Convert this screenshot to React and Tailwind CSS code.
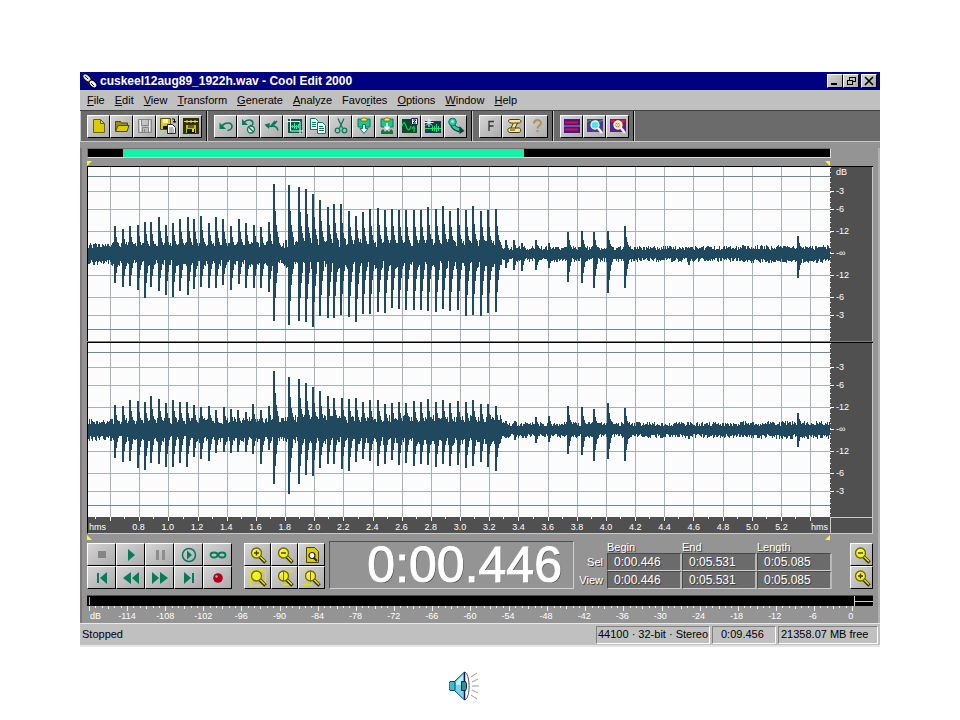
import React from "react";

// [x, height above the centre line, depth below it]
const LEFT_SPIKES = [
  [115, 28, 29], [123, 25, 33], [130, 28, 32], [138, 29, 36], [145, 32, 44], [151, 32, 33],
  [159, 37, 37], [166, 29, 41], [173, 31, 43], [180, 35, 37], [188, 37, 41], [194, 35, 35],
  [201, 38, 33], [209, 31, 34], [216, 37, 34], [223, 35, 31], [231, 28, 36], [239, 35, 30],
  [246, 31, 34], [254, 29, 34], [261, 27, 34], [269, 32, 38], [274, 70, 67], [289, 69, 71],
  [299, 67, 67], [306, 65, 68], [313, 60, 73], [320, 54, 62], [328, 47, 64], [334, 50, 64],
  [341, 50, 61], [349, 43, 63], [356, 38, 68], [363, 42, 60], [370, 45, 60], [378, 46, 58],
  [385, 44, 59], [392, 45, 54], [399, 44, 55], [406, 44, 56], [414, 44, 56], [421, 44, 56],
  [428, 47, 57], [436, 45, 58], [443, 48, 55], [450, 43, 57], [458, 46, 56], [466, 44, 62],
  [473, 48, 61], [481, 43, 62], [488, 44, 59], [496, 45, 58], [506, 14, 14], [514, 14, 16],
  [522, 11, 17], [536, 14, 16], [549, 11, 14], [568, 22, 28], [582, 23, 29], [594, 22, 34],
  [608, 23, 39], [625, 28, 34], [689, 6, 11], [798, 18, 24],
];

const RIGHT_SPIKES = [
  [115, 25, 28], [123, 24, 32], [130, 30, 31], [138, 29, 38], [145, 28, 40], [151, 34, 33],
  [159, 31, 34], [166, 27, 37], [173, 30, 37], [180, 28, 33], [187, 28, 37], [194, 25, 27],
  [201, 23, 29], [209, 24, 31], [216, 20, 23], [224, 23, 22], [231, 21, 23], [238, 20, 22],
  [246, 18, 22], [253, 26, 24], [261, 20, 34], [269, 24, 20], [274, 59, 54], [289, 53, 64],
  [299, 51, 54], [306, 47, 45], [313, 43, 46], [320, 39, 38], [328, 34, 34], [334, 32, 34],
  [342, 32, 39], [349, 31, 41], [356, 32, 32], [363, 28, 29], [370, 30, 31], [378, 30, 36],
  [385, 26, 34], [392, 27, 30], [399, 28, 35], [406, 27, 33], [414, 29, 36], [421, 28, 34],
  [428, 31, 35], [436, 28, 37], [443, 30, 34], [450, 27, 36], [458, 29, 35], [466, 28, 38],
  [473, 30, 36], [481, 26, 32], [488, 26, 37], [496, 24, 41], [506, 9, 8], [515, 9, 10],
  [536, 13, 13], [549, 14, 12], [568, 24, 24], [582, 23, 25], [594, 21, 31], [608, 27, 29],
  [625, 22, 31], [689, 5, 9], [798, 17, 17],
];

const PLOT_LEFT = 88;
const PLOT_WIDTH = 742;
const CENTRE = 87;
const UP_DECAY = [1, 1, 0.62, 0.42, 0.32, 0.24];
const DOWN_DECAY = [1, 1, 0.66, 0.44, 0.28];

const noiseLevel = (x) => {
  if (x < 112) return 10;
  if (x < 285) return 11;
  if (x < 502) return 13;
  if (x < 660) return 7;
  if (x < 740) return 7;
  return 8;
};

const buildWave = (spikes, seed) => {
  let state = seed;
  const random = () => {
    state = (state * 16807) % 2147483647;
    return state / 2147483647;
  };

  const up = [];
  const down = [];
  for (let i = 0; i < PLOT_WIDTH; i++) {
    const level = noiseLevel(i + PLOT_LEFT);
    up.push(level * (0.55 + random() * 0.6));
    down.push(level * (0.55 + random() * 0.6));
  }
  spikes.forEach(([x, high, low]) => {
    const start = x - PLOT_LEFT - 1;
    UP_DECAY.forEach((k, n) => {
      up[start + n] = Math.max(up[start + n], high * k);
    });
    DOWN_DECAY.forEach((k, n) => {
      down[start + n] = Math.max(down[start + n], low * k);
    });
  });

  let d = "";
  for (let i = 0; i < PLOT_WIDTH; i++) {
    const top = Math.round(CENTRE - up[i]);
    const bottom = Math.round(CENTRE + down[i]);
    d += `M${i} ${top}h1v${bottom - top}h-1z`;
  }
  return d;
};

const leftWave = buildWave(LEFT_SPIKES, 4711);
const rightWave = buildWave(RIGHT_SPIKES, 9203);

const TIME_LINES = Array.from({ length: 25 }, (_, i) => Math.round(22 + i * 29.17));
const LEVEL_LINES = [24, 42, 64, 108, 130, 148];
const TIME_LABELS = Array.from({ length: 23 }, (_, i) => (0.8 + i * 0.2).toFixed(1));
const METER_LABELS = Array.from({ length: 20 }, (_, i) => String(-114 + i * 6));

const raised =
  "flex items-center justify-center border border-t-white border-l-white border-r-black border-b-black bg-linear-to-br from-[#d4d4d4] to-[#acacac]";

const GREEN = "#087a5c";

const Icon = ({ size = 18, children }) => (
  <svg
    width={size}
    height={size}
    viewBox="0 0 18 18"
    fill="none"
    className="shrink-0"
    aria-hidden="true"
  >
    {children}
  </svg>
);

const Magnifier = ({ children }) => (
  <>
    <path d="M10.500 10.500l6 6" stroke="#333000" strokeWidth="3.600" />
    <path d="M10.500 10l5.500 5.500" stroke="#e8e000" strokeWidth="1.600" />
    <circle cx="7.500" cy="7" r="5" fill="#f4f020" stroke="#6d6a00" strokeWidth="1.300" />
    <path d="M4.500 6c.5-1.500 1.500-2 3-2" stroke="#ffffc0" />
    {children}
  </>
);

const PasteBase = () => (
  <>
    <path d="M3 2h12v8H3z" fill="#16c79a" stroke={GREEN} />
    <path d="M6 4V2l2-1h2l2 1v2z" fill="#f2ee4a" stroke="#6d6a00" strokeWidth=".8" />
  </>
);

const icons = {
  new: <path d="M3.500 2.500h7l4 4v9h-11zM10.500 2.500v4h4" fill="#dccb00" stroke="#6b6100" />,
  open: (
    <>
      <path d="M2.500 14V4.500h5l1 1.500h6V8" fill="#a09000" stroke="#4d4600" />
      <path d="M2.500 14.500L5 8.500h11l-2 6z" fill="#dccb00" stroke="#4d4600" />
    </>
  ),
  save: (
    <>
      <path d="M2.500 2.500h13v13h-13z" stroke="#858585" />
      <path d="M5.500 2.500v6h7v-6M6.500 15.500v-5h6v5M8.500 12v3" stroke="#858585" />
      <path d="M3.500 3.500h1v11M13.500 3.500v11" stroke="#f2f2f2" />
    </>
  ),
  saveAs: (
    <>
      <path d="M1.500 1.500h10v11h-10z" fill="#dccb00" stroke="#5a5200" />
      <path d="M4 2h5v4H4z" fill="#eee" />
      <path d="M4 9h4v3H4z" fill="#111" />
      <path d="M8.500 7.500h5l3 3v6h-8z" fill="#fff" stroke="#222" />
      <path d="M10 11h4M10 13h5M10 15h5" stroke="#444" strokeWidth=".8" />
      <path d="M13 2h2.500v3M14 4l1.500 2L17 4" stroke="#111" />
    </>
  ),
  saveSel: (
    <>
      <path d="M1 1h16v16H1z" fill="#2e3200" />
      <path d="M4 8h10v8H4z" fill="#c9bc00" />
      <path d="M6 8h6v3H6z" fill="#6d6600" />
      <path d="M5 12h8v4H5z" fill="#151500" />
      <path d="M10 12h2v3h-2z" fill="#e8e000" />
      <path d="M2 4.500h14M5 3v3M9 3v3M13 3v3" stroke="#f0e800" />
    </>
  ),
  undo: (
    <>
      <path d="M5 9c3-4 10-4 10 .5 0 2-2 4-4.500 4" stroke={GREEN} strokeWidth="1.600" />
      <path d="M2.500 5.500v6.500H9z" fill={GREEN} />
    </>
  ),
  noUndo: (
    <>
      <path d="M4 5.500c3-4 9-3 9 .5 0 2-2 3-3 3" stroke={GREEN} strokeWidth="1.500" />
      <path d="M2 2v6h6z" fill={GREEN} />
      <circle cx="11" cy="12.500" r="3.500" fill="#d8e8e0" stroke={GREEN} strokeWidth="1.300" />
      <path d="M8.500 10l5 5" stroke={GREEN} strokeWidth="1.300" />
    </>
  ),
  redo: (
    <>
      <path d="M3 8.500c4 2 7 1 11-4.500M7 9.500c4-1 7 0 8 4M8 9l4-5" stroke={GREEN} strokeWidth="1.500" />
      <path d="M1.500 7.500L7 6l-1 6z" fill={GREEN} />
    </>
  ),
  trim: (
    <>
      <path d="M2 2h14v14H2z" fill="#075a43" />
      <path d="M1 4.500h13V17M4.500 1v13H17" stroke="#e5fff5" />
      <path d="M5 9.500h8M6.500 8v3M8.500 6v6M10.500 8v4M12.500 7v4" stroke="#20f0a0" />
    </>
  ),
  copy: (
    <>
      <path d="M1.500 1.500h5l3 3v8h-8z" fill="#f3fffb" stroke={GREEN} />
      <path d="M8.500 5.500h5l3 3v8h-8z" fill="#f3fffb" stroke={GREEN} />
      <path d="M3 5.500h4M3 7.500h4M3 9.500h4M10 9.500h4M10 11.500h5M10 13.500h5" stroke={GREEN} />
    </>
  ),
  cut: (
    <>
      <path d="M6 1.500l4.500 9.500M12 1.500L7.500 11" stroke={GREEN} strokeWidth="1.300" />
      <circle cx="5.500" cy="13.500" r="2.300" stroke={GREEN} strokeWidth="1.300" />
      <circle cx="12.500" cy="13.500" r="2.300" stroke={GREEN} strokeWidth="1.300" />
    </>
  ),
  paste: (
    <>
      <PasteBase />
      <path d="M7.500 7.500h3v4h2.500L9 16.500 5 11.500h2.500z" fill="#f4fffb" stroke={GREEN} />
    </>
  ),
  mixPaste: (
    <>
      <PasteBase />
      <path d="M9 6v6M6.500 9.500L9 12l2.500-2.500" stroke="#fff" strokeWidth="1.600" />
      <path d="M3 17v-3l2-2 2 3 2-2 2 2 2-3 2 2v3z" fill="#087a3c" />
    </>
  ),
  zero: (
    <>
      <path d="M1 2h15v14H1z" fill="#064a2d" />
      <path d="M1 9c2-6 3-3 4 0s3 7 5 0M13 9v6M11 12c1-3 2-3 3 0" stroke="#17c553" strokeWidth="1.200" />
      <path d="M10.500 1.500h6v6h-6z" fill="#eef" stroke="#226" />
      <path d="M12 3h3l-3 3h3" stroke="#113" />
    </>
  ),
  convert: (
    <>
      <path d="M1 4h16v12H1z" fill="#173c52" />
      <path d="M1 11.500h16M8.500 9v5M10.500 9v5M12.500 7v8M14.500 9v5" stroke="#18e078" />
      <path d="M5 1v9M.5 5.500h9M2 2.500l6 6M8 2.500l-6 6" stroke="#e3fff9" />
    </>
  ),
  pin: (
    <>
      <path d="M5 6c1 5 4 6 8 7" stroke="#153e36" strokeWidth="5" />
      <path d="M5 6c1 5 4 6 7.500 6.500" stroke="#23cda5" strokeWidth="3" />
      <circle cx="5.500" cy="5" r="3.800" fill="#23cda5" stroke={GREEN} />
      <circle cx="5.500" cy="4.500" r="1.200" fill="#c9fff0" />
      <path d="M12.500 9l5 5-5 3z" fill="#153e36" />
    </>
  ),
  letterF: (
    <path d="M7 14V4.500h5M7 9h4.500" stroke="#333" strokeWidth="1.300" />
  ),
  script: (
    <>
      <path
        d="M5 2.500h9c2.500 0 2.500 3.500 0 3.500h-1.500l-2.500 5h4c2.500 0 2 4.500 0 4.500H5c-3 0-3-4.500 0-4.500h1L8.500 6H6C3 6 3 2.500 5 2.500z"
        fill="#f4e6a0"
        stroke="#4a3c08"
      />
      <path d="M9 6h4M6 11h5M5 13h5" stroke="#4a3c08" />
    </>
  ),
  help: (
    <>
      <path d="M6 6.500c0-4.500 7-4.500 7-.5 0 2.500-3.500 2.500-3.500 5.500" stroke="#a8935a" strokeWidth="2" />
      <path d="M8.500 13h2v2h-2z" fill="#a8935a" />
    </>
  ),
  waves: (
    <>
      <path d="M1 2h16v14H1z" fill="#4d1484" />
      <path d="M2 5.500h13M2 12.500h13" stroke="#d5143e" strokeWidth="2" />
      <path d="M1 9h16" stroke="#a98cc9" />
    </>
  ),
  spectrum: (
    <>
      <path d="M1 2h16v13H1z" fill="#53358c" />
      <path d="M1 5l3-2 3 3 3-3 3 2 4-2" stroke="#36b374" />
      <path d="M12 11l4 5" stroke="#f5f5ff" strokeWidth="2.500" />
      <circle cx="9" cy="8" r="4" fill="#4ce8e8" stroke="#eaf6ff" strokeWidth="1.300" />
    </>
  ),
  stats: (
    <>
      <path d="M1 2h16v13H1z" fill="#58208c" />
      <path d="M2 4h3v3h2M16 4h-3v3" stroke="#e01c2c" strokeWidth="2" />
      <path d="M12 11l4 5" stroke="#f5f5ff" strokeWidth="2.500" />
      <circle cx="9" cy="8" r="4" fill="#f7e8a0" stroke="#fff" strokeWidth="1.300" />
      <path d="M6 8h6M7 6.500h4M7 9.500h4" stroke="#e06a1c" strokeDasharray="1 1" />
    </>
  ),
  stop: <path d="M5 5h8v7H5z" fill="#858585" />,
  play: <path d="M6 3l7 6-7 6z" fill={GREEN} />,
  pause: <path d="M5 4h3v10H5zM11 4h3v10h-3z" fill="#8d8d8d" />,
  playEnd: (
    <>
      <circle cx="9" cy="9" r="6.500" stroke={GREEN} strokeWidth="1.500" />
      <path d="M7 4.500L12 9l-5 4.500z" fill={GREEN} />
    </>
  ),
  loop: (
    <>
      <ellipse cx="5" cy="9" rx="3.500" ry="2.500" stroke={GREEN} strokeWidth="1.800" />
      <ellipse cx="13" cy="9" rx="3.500" ry="2.500" stroke={GREEN} strokeWidth="1.800" />
    </>
  ),
  toStart: <path d="M4 4h2v10H4zM14 3v12L7 9z" fill={GREEN} />,
  rewind: <path d="M9 3v12L1 9zM17 3v12L10 9z" fill={GREEN} />,
  forward: <path d="M1 3v12l7-6zM9 3v12l8-6z" fill={GREEN} />,
  toEnd: <path d="M4 3v12l7-6zM12 4h2v10h-2z" fill={GREEN} />,
  record: (
    <>
      <circle cx="9" cy="9" r="4.800" fill="#a8041c" />
      <circle cx="7.500" cy="7.500" r="1.200" fill="#ff8c9a" />
    </>
  ),
  zoomIn: (
    <Magnifier>
      <path d="M5 7h5M7.500 4.500v5" stroke="#443f00" strokeWidth="1.400" />
    </Magnifier>
  ),
  zoomOut: (
    <Magnifier>
      <path d="M5 7h5" stroke="#443f00" strokeWidth="1.400" />
    </Magnifier>
  ),
  zoomFull: (
    <>
      <path d="M3.500 1.500h8l4 4v11h-12z" fill="#dccb00" stroke="#4b4500" />
      <path d="M10 11l4 4" stroke="#222" strokeWidth="2" />
      <circle cx="9" cy="9.500" r="3" fill="#fff" stroke="#222" strokeWidth="1.200" />
    </>
  ),
  zoomSel: (
    <>
      <path d="M1.500 1.500h15v15h-15z" stroke="#e8e000" strokeWidth="1.500" />
      <Magnifier />
    </>
  ),
  zoomLeft: (
    <>
      <path d="M17 2.500H7M17 15.500H7" stroke="#e8e000" strokeWidth="1.600" />
      <Magnifier>
        <path d="M7.500 2.500v9" stroke="#6d6a00" />
      </Magnifier>
    </>
  ),
  zoomRight: (
    <>
      <path d="M0 2.500h9M0 15.500h9" stroke="#e8e000" strokeWidth="1.600" />
      <Magnifier>
        <path d="M7.500 2.500v9" stroke="#6d6a00" />
      </Magnifier>
    </>
  ),
};

const TOOL_GROUPS = [
  [["New", "new"], ["Open", "open"], ["Save", "save"], ["Save as", "saveAs"], ["Save selection", "saveSel"]],
  [
    ["Undo", "undo"], ["Disable undo", "noUndo"], ["Repeat last command", "redo"], ["Trim", "trim"],
    ["Copy", "copy"], ["Cut", "cut"], ["Paste", "paste"], ["Mix paste", "mixPaste"],
    ["Zero crossings", "zero"], ["Convert sample type", "convert"], ["Add to cue list", "pin"],
  ],
  [["Frequency", "letterF"], ["Scripts", "script"], ["Help contents", "help"]],
  [["Waveform view", "waves"], ["Frequency analysis", "spectrum"], ["Statistics", "stats"]],
];

const TRANSPORT = [
  ["Stop", "stop"], ["Play", "play"], ["Pause", "pause"], ["Play to end", "playEnd"], ["Loop", "loop"],
  ["Go to beginning", "toStart"], ["Rewind", "rewind"], ["Fast forward", "forward"], ["Go to end", "toEnd"], ["Record", "record"],
];

const ZOOMS = [
  ["Zoom in", "zoomIn"], ["Zoom out", "zoomOut"], ["Zoom full", "zoomFull"],
  ["Zoom to selection", "zoomSel"], ["Zoom to left", "zoomLeft"], ["Zoom to right", "zoomRight"],
];

// label, index of the underlined letter
const MENUS = [
  ["File", 0], ["Edit", 0], ["View", 0], ["Transform", 0], ["Generate", 0],
  ["Analyze", 0], ["Favorites", 4], ["Options", 0], ["Window", 0], ["Help", 0],
];

const TitleBar = () => (
  <header className="flex h-[18px] items-center bg-[#000080] pl-[2px] pr-[3px] text-white">
    <svg width="16" height="16" viewBox="0 0 16 16" className="mr-[2px] shrink-0" aria-hidden="true">
      <path d="M1 2l4-1 9 9 1 4-3 1-9-9z" fill="#111" />
      <ellipse cx="5" cy="5" rx="5" ry="3" transform="rotate(45 5 5)" fill="#ddd" stroke="#000" />
      <ellipse cx="11" cy="11" rx="4.500" ry="3" transform="rotate(45 11 11)" fill="#eee" stroke="#000" />
      <path d="M3 3l3 3M9 10l3 3M1 7l6 5M9 3l5 5" stroke="#222" />
      <path d="M4 5l2 2M11 10l2 2" stroke="#fff" />
    </svg>
    <h1 className="flex-1 truncate text-[12px] leading-[18px] font-bold">
      cuskeel12aug89_1922h.wav - Cool Edit 2000
    </h1>
    <div className="flex">
      <button aria-label="Minimize" className={`${raised} h-[14px] w-4`}>
        <svg width="10" height="10" viewBox="0 0 10 10"><path d="M1 7h6v2H1z" /></svg>
      </button>
      <button aria-label="Restore" className={`${raised} mr-[2px] h-[14px] w-4`}>
        <svg width="10" height="10" viewBox="0 0 10 10" fill="none" stroke="#000" shapeRendering="crispEdges">
          <path d="M3 1h6M3 1.500h6v4H7M3.500 1v3M1 4h5M1.500 4.500h5v4h-5z" />
        </svg>
      </button>
      <button aria-label="Close" className={`${raised} h-[14px] w-4`}>
        <svg width="10" height="10" viewBox="0 0 10 10" stroke="#000" strokeWidth="1.600">
          <path d="M1 1l8 8M9 1l-8 8" />
        </svg>
      </button>
    </div>
  </header>
);

const MenuBar = () => (
  <nav className="flex h-5 items-center gap-[10px] bg-[#c0c0c0] pl-[7px] text-[11px] text-black">
    {MENUS.map(([label, at]) => (
      <button key={label}>
        {label.slice(0, at)}
        <span className="underline underline-offset-1">{label[at]}</span>
        {label.slice(at + 1)}
      </button>
    ))}
  </nav>
);

const Toolbar = () => (
  <div className="flex h-8 border-t border-b border-t-[#404040] border-b-[#c8c8c8] bg-[#6b6b6b]">
    {TOOL_GROUPS.map((group, i) => (
      <div
        key={i}
        className="flex items-center border-l border-r border-l-[#c8c8c8] border-r-black pr-1 pl-[6px]"
      >
        {group.map(([label, icon]) => (
          <button key={label} aria-label={label} className={`${raised} h-[23px] w-[23px]`}>
            <Icon>{icons[icon]}</Icon>
          </button>
        ))}
      </div>
    ))}
    <div className="flex-1 border-l border-l-[#c8c8c8]" />
  </div>
);

const Markers = ({ bottom }) => (
  <div className={`flex h-[5px] justify-between ${bottom ? "mt-px" : "mt-[3px]"} mr-[43px]`}>
    <svg width="5" height="5" viewBox="0 0 5 5" fill="#ffff00" aria-hidden="true">
      <path d={bottom ? "M0 0l5 5H0z" : "M0 0h5L0 5z"} />
    </svg>
    <svg width="5" height="5" viewBox="0 0 5 5" fill="#ffff00" aria-hidden="true">
      <path d={bottom ? "M5 0v5H0z" : "M0 0h5v5z"} />
    </svg>
  </div>
);

const LevelRuler = ({ showUnit }) => (
  <div className="flex w-[43px] shrink-0 border-r border-r-[#c8c8c8] bg-[#505050] text-[9px] text-white">
    <svg width="6" height="174" viewBox="0 0 6 174" stroke="#fff" shapeRendering="crispEdges" aria-hidden="true">
      <path d="M.5 0v174" strokeDasharray="1 4" />
      <path d="M0 24.500h4M0 42.500h4M0 64.500h4M0 86.500h4M0 108.500h4M0 130.500h4M0 148.500h4" />
    </svg>
    <div className="flex flex-col leading-[10px]">
      <span className="h-[15px]">{showUnit ? "dB" : ""}</span>
      <span className="flex h-[18px] items-center">-3</span>
      <span className="flex h-[18px] items-center">-6</span>
      <span className="flex h-[26px] items-center">-12</span>
      <span className="flex h-[18px] items-center">-∞</span>
      <span className="flex h-[26px] items-center">-12</span>
      <span className="flex h-[18px] items-center">-6</span>
      <span className="flex h-[18px] items-center">-3</span>
    </div>
  </div>
);

const Channel = ({ wave, label, showUnit }) => (
  <div className="flex border-t border-l border-black">
    <svg
      viewBox="0 0 742 174"
      preserveAspectRatio="none"
      role="img"
      aria-label={label}
      shapeRendering="crispEdges"
      className="h-[174px] min-w-0 flex-1 bg-[#fcfcfc]"
    >
      <path
        d={TIME_LINES.map((x) => `M${x}.5 0v174`).join("") + LEVEL_LINES.map((y) => `M0 ${y}.5h742`).join("")}
        stroke="#a9b1b6"
      />
      <path d="M0 9.500h742M0 162.500h742" stroke="#6f8799" />
      <path d={wave} fill="#20485f" />
    </svg>
    <LevelRuler showUnit={showUnit} />
  </div>
);

const TimeRuler = () => (
  <div className="flex border-b border-l border-b-[#c8c8c8] border-l-black bg-[#505050] text-[9px] text-white">
    <div className="min-w-0 flex-1">
      <svg
        viewBox="0 0 742 5"
        preserveAspectRatio="none"
        shapeRendering="crispEdges"
        className="block h-[5px] w-full"
        aria-hidden="true"
      >
        <path
          d={TIME_LINES.map((x) => `M${x}.5 0v4M${x - 15}.5 0v2`).join("")}
          stroke="#fff"
        />
      </svg>
      <div className="flex h-[11px] leading-[11px]">
        <span className="w-9 pl-px">hms</span>
        {TIME_LABELS.map((t) => (
          <span key={t} className="min-w-0 flex-1 text-center">{t}</span>
        ))}
        <span className="w-[34px] pr-[2px] text-right">hms</span>
      </div>
    </div>
    <div className="w-[43px] shrink-0 border-t border-r border-l border-[#c8c8c8]" />
  </div>
);

const TimeTable = () => (
  <table className="border-separate border-spacing-0 text-[12px] leading-4 text-white [text-shadow:1px_1px_0_#404040]">
    <thead>
      <tr className="text-left text-[11px] leading-3">
        <td />
        <th scope="col" className="font-normal">Begin</th>
        <th scope="col" className="font-normal">End</th>
        <th scope="col" className="font-normal">Length</th>
      </tr>
    </thead>
    <tbody>
      {["Sel", "View"].map((row) => (
        <tr key={row}>
          <th scope="row" className="w-[30px] pr-1 text-right text-[11px] font-normal">{row}</th>
          {["0:00.446", "0:05.531", "0:05.085"].map((v) => (
            <td key={v} className="w-[75px] border-r-2 border-b border-r-[#b8b8b8] border-b-[#d0d0d0] border-t border-l border-t-[#484848] border-l-[#484848] bg-[#6b6b6b] pl-[6px]">
              {v}
            </td>
          ))}
        </tr>
      ))}
    </tbody>
  </table>
);

const Controls = () => (
  <div className="mt-px flex h-12 items-end">
    <div className="grid grid-cols-5">
      {TRANSPORT.map(([label, icon]) => (
        <button key={label} aria-label={label} className={`${raised} h-[23px] w-[29px]`}>
          <Icon>{icons[icon]}</Icon>
        </button>
      ))}
    </div>
    <div className="ml-3 grid grid-cols-3">
      {ZOOMS.map(([label, icon]) => (
        <button key={label} aria-label={label} className={`${raised} h-[23px] w-[27px]`}>
          <Icon>{icons[icon]}</Icon>
        </button>
      ))}
    </div>
    <output className="ml-1 flex h-12 flex-1 items-center justify-end border border-t-[#505050] border-l-[#505050] border-r-[#d0d0d0] border-b-[#d0d0d0] pr-[11px] text-[50px] leading-[46px] text-white [-webkit-text-stroke:1px_#fff] [text-shadow:1px_1px_0_#505050]">
      0:00.446
    </output>
    <div className="ml-[3px]">
      <TimeTable />
    </div>
    <div className="ml-[18px] flex flex-col">
      <button aria-label="Vertical zoom out" className={`${raised} h-[23px] w-[23px]`}>
        <Icon>{icons.zoomOut}</Icon>
      </button>
      <button aria-label="Vertical zoom in" className={`${raised} h-[23px] w-[23px]`}>
        <Icon>{icons.zoomIn}</Icon>
      </button>
    </div>
  </div>
);

const Meter = () => (
  <div className="mt-[6px] text-[9px] text-white">
    <div className="flex h-[11px] border-t border-t-[#505050] bg-black">
      <div className="my-px ml-[2px] w-px bg-[#c8c800]" />
      <div className="flex-1" />
      <div className="w-px bg-[#d0d0d0]" />
      <div className="my-auto h-px w-[18px] bg-[#d0d0d0]" />
    </div>
    <svg
      viewBox="0 0 785 5"
      preserveAspectRatio="none"
      shapeRendering="crispEdges"
      className="block h-[5px] w-full"
      aria-hidden="true"
    >
      <path
        d={Array.from({ length: 121 }, (_, i) => `M${Math.round(2 + i * 6.35)}.5 0v${i % 6 === 0 ? 5 : i % 3 === 0 ? 3 : 2}`).join("")}
        stroke="#eee"
      />
    </svg>
    <div className="flex h-[11px] pr-[3px] leading-[11px]">
      <span className="w-[21px] pl-[3px]">dB</span>
      {METER_LABELS.map((v) => (
        <span key={v} className="min-w-0 flex-1 text-center">{v}</span>
      ))}
    </div>
  </div>
);

const sunken =
  "flex h-[18px] items-center border border-t-[#808080] border-l-[#808080] border-r-white border-b-white";

const StatusBar = () => (
  <footer className="flex h-6 items-center gap-[2px] border-t border-b-2 border-t-[#e8e8e8] border-b-[#e4e4e4] bg-[#c0c0c0] pr-[2px] pl-[2px] text-[11px] text-black">
    <span className="flex-1">Stopped</span>
    <span className={`${sunken} w-[114px] pl-px whitespace-nowrap`}>44100 · 32-bit · Stereo</span>
    <span className={`${sunken} w-[64px] pl-2`}>0:09.456</span>
    <span className={`${sunken} w-[100px] pl-[2px] whitespace-nowrap`}>21358.07 MB free</span>
  </footer>
);

const SoundClip = () => (
  <button aria-label="Play sound">
    <svg width="30" height="30" viewBox="0 0 30 30" fill="none">
      <path d="M16 1c5 2 6 25 0 28" fill="#fff" stroke="#555" />
      <path d="M5.500 10.500L15.500 1v28L5.500 19.500z" fill="#79d5e8" stroke="#074a63" />
      <path d="M1 10.500h5v9H1l-1-2v-5z" fill="#48b6d0" stroke="#074a63" />
      <path d="M7 11l7-7v10H7z" fill="#b9f2f6" />
      <path d="M15.500 1.500v27" stroke="#10106a" strokeWidth="1.500" />
      <path d="M12.500 10.500h4l1 2v5l-1 2h-4z" fill="#388c98" stroke="#102a34" />
      <path d="M22 6l6-4M23 11l6-3M23 15h7M23 19l6 3M22 24l6 4" stroke="#999" />
    </svg>
  </button>
);

const App = () => (
  <main className="min-h-screen bg-white px-20 pt-[72px] font-['Liberation_Sans',Arial,sans-serif]">
    <section className="bg-[#949494]">
      <TitleBar />
      <MenuBar />
      <Toolbar />
      <div className="border-r-2 border-l-2 border-r-[#b0b0b0] border-l-[#7c787c] pr-[5px] pb-[1px] pl-[5px]">
        <div className="mt-[6px] mr-[42px] flex h-[10px] border border-t-[#707070] border-l-[#707070] border-r-[#d8d8d8] border-b-[#d8d8d8] bg-black">
          <div className="w-[35px]" />
          <div className="w-[54%] bg-[#18efa8]" />
        </div>
        <Markers />
        <Channel wave={leftWave} label="Left channel waveform" showUnit />
        <div className="h-px bg-[#808080]" />
        <Channel wave={rightWave} label="Right channel waveform" />
        <TimeRuler />
        <Markers bottom />
        <Controls />
        <Meter />
      </div>
      <StatusBar />
    </section>
    <div className="mt-6 flex justify-center pr-8">
      <SoundClip />
    </div>
  </main>
);

export default App;
